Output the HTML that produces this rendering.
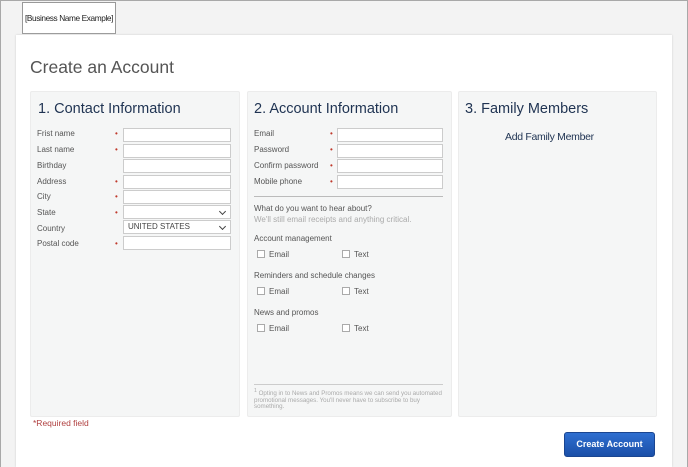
<!DOCTYPE html>
<html><head><meta charset="utf-8"><style>
*{margin:0;padding:0;box-sizing:border-box}
html,body{width:688px;height:467px;overflow:hidden}
body{background:#f3f3f3;font-family:"Liberation Sans",Arial,sans-serif;position:relative}
.a{position:absolute}
.frame{left:0;top:0;width:688px;height:467px;border:1px solid #a8a8a8;border-bottom:none;z-index:5}
.biz{left:22px;top:2px;width:94px;height:32px;border:1px solid #999;background:#fff;font-size:8.3px;color:#222;line-height:30px;text-align:center;letter-spacing:-0.4px;white-space:nowrap}
.card{left:16px;top:35px;width:656px;height:432px;background:#fff;box-shadow:0 0 2px #ccc}
.panel{background:#f5f6f6;border:1px solid #ececec;border-radius:2px}
h2{position:absolute;font-weight:normal;font-size:14.5px;color:#1f3352;white-space:nowrap}
.l{position:absolute;font-size:8px;color:#555}
.s{position:absolute;font-size:8px;color:#c0392b}
.i{position:absolute;height:14px;background:#fff;border:1px solid #ccc}
.cb{position:absolute;width:8px;height:8px;border:1px solid #aaa;background:#fff}
.sel::after{content:"";position:absolute;right:5px;top:3px;width:4px;height:4px;border-right:1px solid #444;border-bottom:1px solid #444;transform:rotate(45deg)}
</style></head><body>
<div class="a frame"></div>
<div class="a biz">[Business Name Example]</div>
<div class="a card"></div>
<div class="a" style="left:30px;top:57px;font-size:17.5px;color:#555">Create an Account</div>

<div class="a panel" style="left:30px;top:91px;width:210px;height:326px"></div>
<div class="a panel" style="left:247px;top:91px;width:205px;height:326px"></div>
<div class="a panel" style="left:458px;top:91px;width:199px;height:326px"></div>

<h2 style="left:38px;top:101px">1. Contact Information</h2>
<h2 style="left:254px;top:101px">2. Account Information</h2>
<h2 style="left:465px;top:101px">3. Family Members</h2>
<div class="a" style="left:505px;top:131px;font-size:10.5px;color:#1f3352;letter-spacing:-0.3px">Add Family Member</div>

<div class="l" style="left:37px;top:129px">Frist name</div><div class="s" style="left:115px;top:129px">•</div><div class="i" style="left:123px;top:128px;width:108px"></div>
<div class="l" style="left:37px;top:145px">Last name</div><div class="s" style="left:115px;top:145px">•</div><div class="i" style="left:123px;top:144px;width:108px"></div>
<div class="l" style="left:37px;top:161px">Birthday</div><div class="i" style="left:123px;top:159px;width:108px"></div>
<div class="l" style="left:37px;top:177px">Address</div><div class="s" style="left:115px;top:177px">•</div><div class="i" style="left:123px;top:175px;width:108px"></div>
<div class="l" style="left:37px;top:192px">City</div><div class="s" style="left:115px;top:192px">•</div><div class="i" style="left:123px;top:190px;width:108px"></div>
<div class="l" style="left:37px;top:208px">State</div><div class="s" style="left:115px;top:208px">•</div><div class="i sel" style="left:123px;top:205px;width:108px"></div>
<div class="l" style="left:37px;top:224px">Country</div><div class="i sel" style="left:123px;top:220px;width:108px;font-size:8px;color:#444;padding-left:4px;line-height:12px">UNITED STATES</div>
<div class="l" style="left:37px;top:239px">Postal code</div><div class="s" style="left:115px;top:239px">•</div><div class="i" style="left:123px;top:236px;width:108px"></div>

<div class="l" style="left:254px;top:129px">Email</div><div class="s" style="left:330px;top:129px">•</div><div class="i" style="left:337px;top:128px;width:106px"></div>
<div class="l" style="left:254px;top:145px">Password</div><div class="s" style="left:330px;top:145px">•</div><div class="i" style="left:337px;top:144px;width:106px"></div>
<div class="l" style="left:254px;top:161px">Confirm password</div><div class="s" style="left:330px;top:161px">•</div><div class="i" style="left:337px;top:159px;width:106px"></div>
<div class="l" style="left:254px;top:177px">Mobile phone</div><div class="s" style="left:330px;top:177px">•</div><div class="i" style="left:337px;top:175px;width:106px"></div>
<div class="a" style="left:254px;top:196px;width:189px;height:1px;background:#bbb"></div>
<div class="l" style="left:254px;top:204px">What do you want to hear about?</div>
<div class="l" style="left:254px;top:215px;color:#aaa">We'll still email receipts and anything critical.</div>
<div class="l" style="left:254px;top:234px">Account management</div>
<div class="cb" style="left:257px;top:250px"></div><div class="l" style="left:269px;top:250px">Email</div>
<div class="cb" style="left:342px;top:250px"></div><div class="l" style="left:354px;top:250px">Text</div>
<div class="l" style="left:254px;top:271px">Reminders and schedule changes</div>
<div class="cb" style="left:257px;top:287px"></div><div class="l" style="left:269px;top:287px">Email</div>
<div class="cb" style="left:342px;top:287px"></div><div class="l" style="left:354px;top:287px">Text</div>
<div class="l" style="left:254px;top:308px">News and promos</div>
<div class="cb" style="left:257px;top:324px"></div><div class="l" style="left:269px;top:324px">Email</div>
<div class="cb" style="left:342px;top:324px"></div><div class="l" style="left:354px;top:324px">Text</div>
<div class="a" style="left:254px;top:384px;width:189px;height:1px;background:#ccc"></div>
<div class="a" style="left:254px;top:388px;width:190px;font-size:6.2px;line-height:6.7px;color:#aaa"><sup>1</sup> Opting in to News and Promos means we can send you automated promotional messages. You'll never have to subscribe to buy something.</div>

<div class="a" style="left:33px;top:418px;font-size:8.5px;color:#b04040">*Required field</div>
<div class="a" style="left:564px;top:432px;width:91px;height:25px;border-radius:3px;background:linear-gradient(#2f6fd0,#1a4fa8);border:1px solid #1a4590;color:#fff;font-size:9px;font-weight:bold;text-align:center;line-height:23px">Create Account</div>
</body></html>
